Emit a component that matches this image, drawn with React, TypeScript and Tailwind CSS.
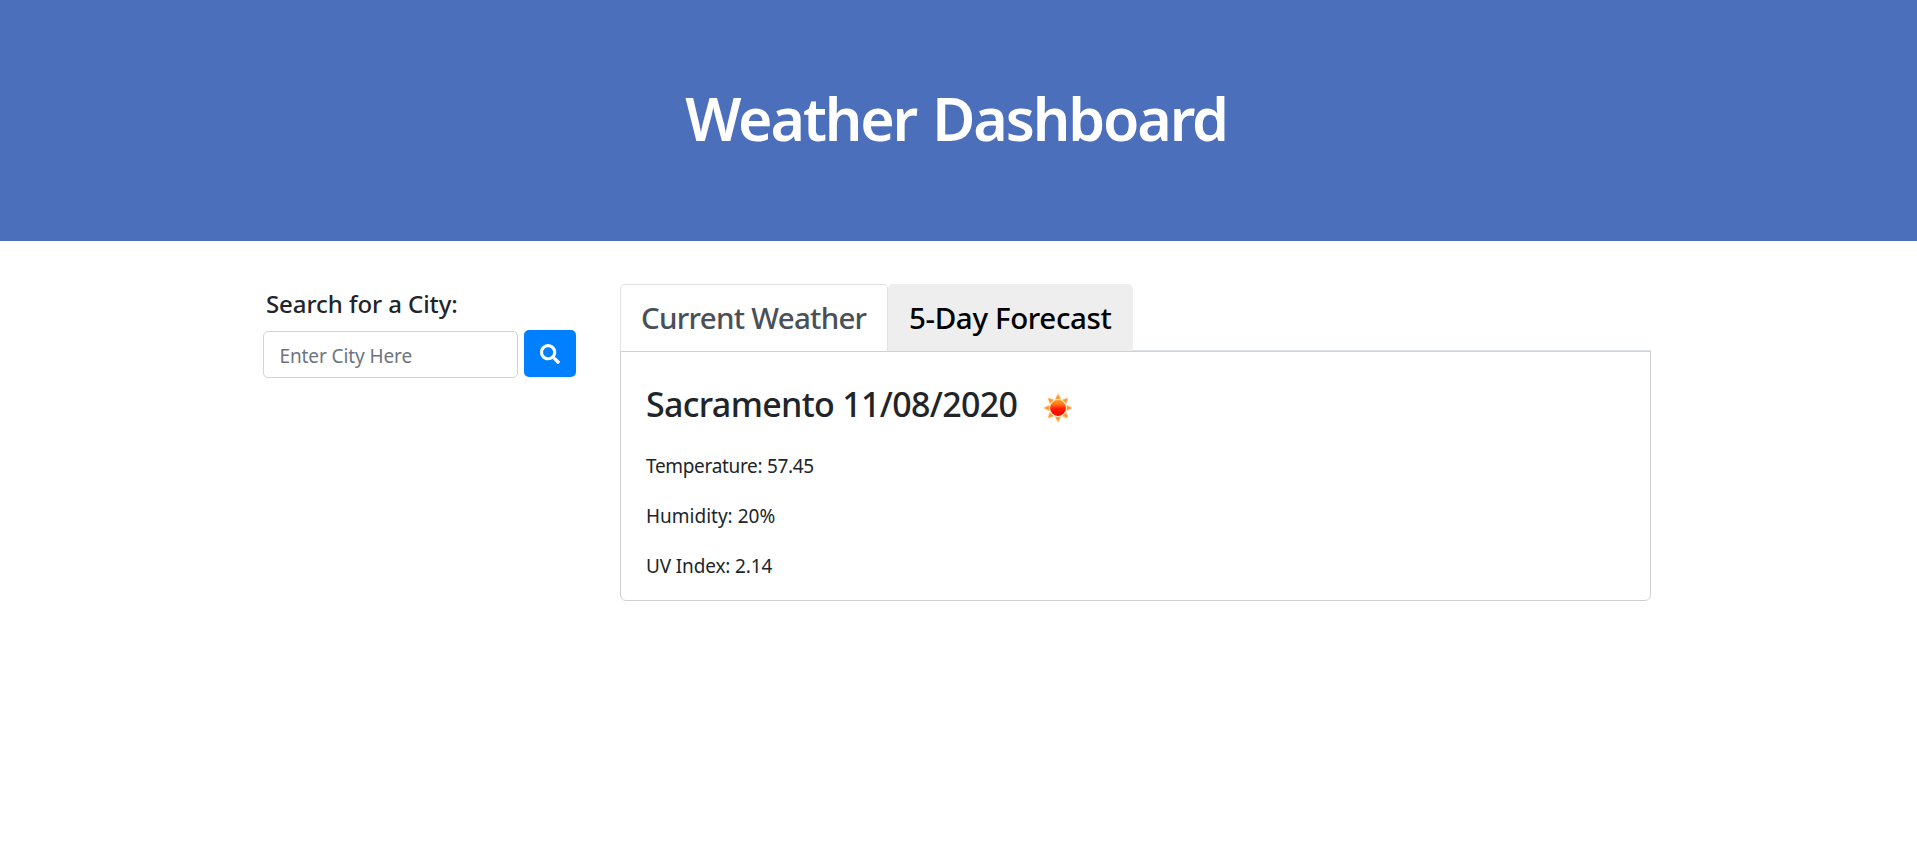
import React from "react";

function SearchIcon() {
  return (
    <svg viewBox="0 0 512 512" className="h-5 w-5 fill-white" aria-hidden="true">
      <path d="M505 442.7L405.300 343c-4.500-4.500-10.600-7-17-7H372c27.600-35.300 44-79.700 44-128C416 93.100 322.900 0 208 0S0 93.100 0 208s93.100 208 208 208c48.300 0 92.700-16.400 128-44v16.300c0 6.400 2.500 12.500 7 17l99.700 99.700c9.400 9.400 24.600 9.400 33.900 0l28.300-28.300c9.400-9.400 9.400-24.600.1-34zM208 336c-70.700 0-128-57.200-128-128 0-70.700 57.200-128 128-128 70.700 0 128 57.200 128 128 0 70.700-57.200 128-128 128z" />
    </svg>
  );
}

function SunIcon() {
  return (
    <svg viewBox="0 0 30 30" className="h-[30px] w-[30px]" aria-hidden="true">
      <defs>
        <linearGradient id="sun" x1="0" y1="0" x2="0" y2="1">
          <stop offset="0" stopColor="#ff9a1c" />
          <stop offset="0.25" stopColor="#ff7a18" />
          <stop offset="0.55" stopColor="#ff1a05" />
          <stop offset="1" stopColor="#ff0000" />
        </linearGradient>
      </defs>
      {[0, 45, 90, 135, 180, 225, 270, 315].map((angle) => (
        <path
          key={angle}
          d="M15 0.800L17.800 6.200H12.200Z"
          fill="#ff9524"
          stroke="#ffc98a"
          strokeWidth="0.6"
          transform={`rotate(${angle} 15 15)`}
        />
      ))}
      <circle cx="15" cy="15" r="8.700" fill="#ffe0b5" />
      <circle cx="15" cy="15" r="7.900" fill="url(#sun)" />
    </svg>
  );
}

export default function App() {
  return (
    <div className="min-h-[845px] bg-white font-['Noto_Sans','Open_Sans',sans-serif] text-[#212529]">
      <header className="flex h-[241px] items-center justify-center bg-[#4b6fbb] pr-[5px] pb-[6px]">
        <h1 className="text-[59px] leading-[70px] font-semibold tracking-[-2.13px] [word-spacing:3px] whitespace-nowrap text-white">
          Weather Dashboard
        </h1>
      </header>

      <main className="flex items-start pl-[263px]">
        <aside className="w-[357px] pt-[47px]">
          <h2 className="pl-[3px] text-[24px] leading-[32px] font-medium tracking-[-0.08px]">
            Search for a City:
          </h2>
          <form className="mt-[10px] flex gap-[6px]" onSubmit={(e) => e.preventDefault()}>
            <input
              type="text"
              placeholder="Enter City Here"
              className="mt-px h-[47px] w-[255px] rounded-[5px] border border-[#ced4da] px-[15.5px] pt-[2px] text-[19px] tracking-[-0.1px] outline-none placeholder:text-[#6c757d]"
            />
            <button
              type="submit"
              aria-label="Search"
              className="flex h-[47px] w-[52px] items-center justify-center rounded-[5px] bg-[#0080ff]"
            >
              <SearchIcon />
            </button>
          </form>
        </aside>

        <section className="w-[1031px] pt-[43px]">
          <nav className="flex h-[67px] text-[29.5px] leading-[38px] font-medium whitespace-nowrap">
            <button className="h-[67px] w-[268px] rounded-t-[5px] border border-b-0 border-[#dee2e6] bg-white pl-[20px] text-left tracking-[-0.72px] text-[#495057]">
              Current Weather
            </button>
            <button className="h-[67px] w-[245px] rounded-t-[5px] bg-[#eeeeee] pl-[21px] text-left tracking-[-0.35px] text-black">
              5-Day Forecast
            </button>
            <div className="flex-1 border-b border-[#dee2e6]" />
          </nav>
          <div className="h-[250px] rounded-b-[6px] border border-[#d0d1d2] pt-[31px] pl-[25px]">
            <div className="flex h-[42px] items-center">
              <h3 className="w-[397px] text-[34px] leading-[42px] font-medium tracking-[-0.67px] whitespace-nowrap">
                Sacramento 11/08/2020
              </h3>
              <div className="pt-[7px]">
                <SunIcon />
              </div>
            </div>
            <div className="flex flex-col gap-[20px] pt-[26px] text-[19px] leading-[30px]">
              <p className="tracking-[-0.32px]">Temperature: 57.45</p>
              <p>Humidity: 20%</p>
              <p className="tracking-[-0.14px]">UV Index: 2.14</p>
            </div>
          </div>
        </section>
      </main>
    </div>
  );
}
